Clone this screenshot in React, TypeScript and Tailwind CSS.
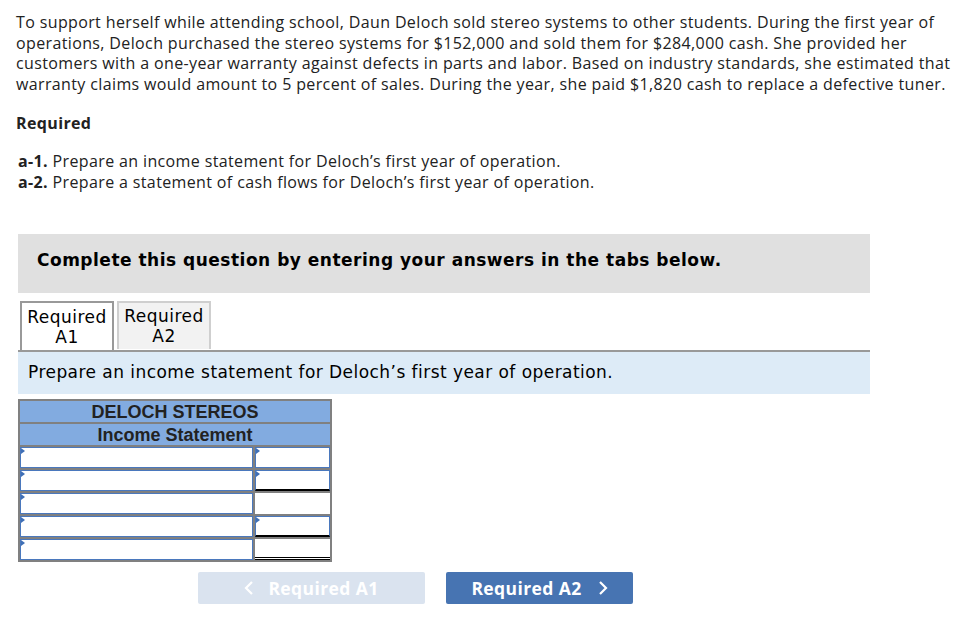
import React from "react";

const body = { fontFamily: '"Open Sans", "Liberation Sans", sans-serif' };
const verdana = { fontFamily: '"DejaVu Sans", Verdana, sans-serif' };
const arial = { fontFamily: '"Liberation Sans", Arial, sans-serif' };

const intro = [
  "To support herself while attending school, Daun Deloch sold stereo systems to other students. During the first year of",
  "operations, Deloch purchased the stereo systems for $152,000 and sold them for $284,000 cash. She provided her",
  "customers with a one-year warranty against defects in parts and labor. Based on industry standards, she estimated that",
  "warranty claims would amount to 5 percent of sales. During the year, she paid $1,820 cash to replace a defective tuner.",
];

function Marker() {
  return (
    <span className="absolute left-0 top-0 h-0 w-0 border-y-[3px] border-l-[4px] border-y-transparent border-l-[#3f6fb6]" />
  );
}

type Right = "input" | "inputTotal" | "blank" | "double";

function Row({ right }: { right: Right }) {
  return (
    <div className="flex gap-[2px]">
      <div className="relative h-[21px] w-[233px] border border-[#4a78bd] bg-white">
        <Marker />
      </div>
      {right === "input" && (
        <div className="relative h-[21px] flex-1 border border-[#4a78bd] bg-white">
          <Marker />
        </div>
      )}
      {right === "inputTotal" && (
        <div className="relative h-[21px] flex-1 border border-b-2 border-[#4a78bd] border-b-black bg-white">
          <Marker />
        </div>
      )}
      {right === "blank" && <div className="h-[21px] flex-1 bg-white" />}
      {right === "double" && (
        <div className="h-[21px] flex-1 border-b-[3px] border-double border-black bg-white" />
      )}
    </div>
  );
}

export default function App() {
  return (
    <div className="min-h-[624px] w-[964px] overflow-hidden bg-white text-[#222]">
      <div className="px-4 pt-[12px] tracking-[0.37px]" style={body}>
        <div className="text-[16px] leading-[20.5px]">
          {intro.map((line) => (
            <div key={line} className="whitespace-nowrap">
              {line}
            </div>
          ))}
        </div>
        <p className="mt-[19px] text-[16px] font-bold leading-[20px]">Required</p>
        <div className="mt-[18px] pl-[2px] text-[16px] leading-[21px]">
          <div>
            <b>a-1.</b> Prepare an income statement for Deloch’s first year of operation.
          </div>
          <div>
            <b>a-2.</b> Prepare a statement of cash flows for Deloch’s first year of operation.
          </div>
        </div>
      </div>

      <div className="ml-[18px] mt-[41px] w-[852px]">
        <div
          className="h-[59px] bg-[#e0e0e0] pl-[19px] pt-[16px] text-[17px] font-bold leading-[20px] tracking-[0.5px] text-black"
          style={verdana}
        >
          Complete this question by entering your answers in the tabs below.
        </div>

        <div className="mt-[8px] flex gap-[3px] pl-[2px] tracking-[0.45px]" style={verdana}>
          <div className="flex h-[49px] w-[94px] flex-col items-center justify-center border-2 border-b-0 border-[#999] bg-white text-[17px] leading-[20px] text-black">
            <span>Required</span>
            <span>A1</span>
          </div>
          <div className="flex h-[48px] w-[94px] flex-col items-center justify-center border-2 border-b-0 border-[#cfcfcf] bg-[#f2f2f2] text-[17px] leading-[20px] text-black">
            <span>Required</span>
            <span>A2</span>
          </div>
        </div>
        <div className="h-[2px] bg-[#999]" />
        <div
          className="flex h-[42px] items-center bg-[#ddebf7] pl-[10px] text-[17px] tracking-[0.45px] text-black"
          style={verdana}
        >
          Prepare an income statement for Deloch’s first year of operation.
        </div>

        <div className="mt-[5px] flex w-[314px] flex-col gap-[2px] bg-[#808080] p-[2px]" style={arial}>
          <div className="flex h-[21px] items-center justify-center bg-[#82abe0] text-[18px] font-bold leading-[20px] text-[#222]">
            DELOCH STEREOS
          </div>
          <div className="flex h-[21px] items-center justify-center bg-[#82abe0] text-[18px] font-bold leading-[20px] text-[#222]">
            Income Statement
          </div>
          <Row right="input" />
          <Row right="inputTotal" />
          <Row right="blank" />
          <Row right="inputTotal" />
          <Row right="double" />
        </div>

        <div className="mt-[10px] flex gap-[21px] pl-[180px] tracking-[0.4px]" style={body}>
          <div className="flex h-[32px] w-[227px] items-center justify-center gap-[14px] rounded-[2px] bg-[#dae3ef] text-[17.5px] font-bold text-white">
            <svg width="10" height="16" viewBox="0 0 10 16" fill="none" stroke="white" strokeWidth="2.2">
              <path d="M8 2 L2 8 L8 14" />
            </svg>
            <span>Required A1</span>
          </div>
          <div className="flex h-[32px] w-[187px] items-center justify-center gap-[16px] rounded-[2px] bg-[#4774b2] text-[17.5px] font-bold text-white">
            <span>Required A2</span>
            <svg width="10" height="16" viewBox="0 0 10 16" fill="none" stroke="white" strokeWidth="2.2">
              <path d="M2 2 L8 8 L2 14" />
            </svg>
          </div>
        </div>
      </div>
    </div>
  );
}
